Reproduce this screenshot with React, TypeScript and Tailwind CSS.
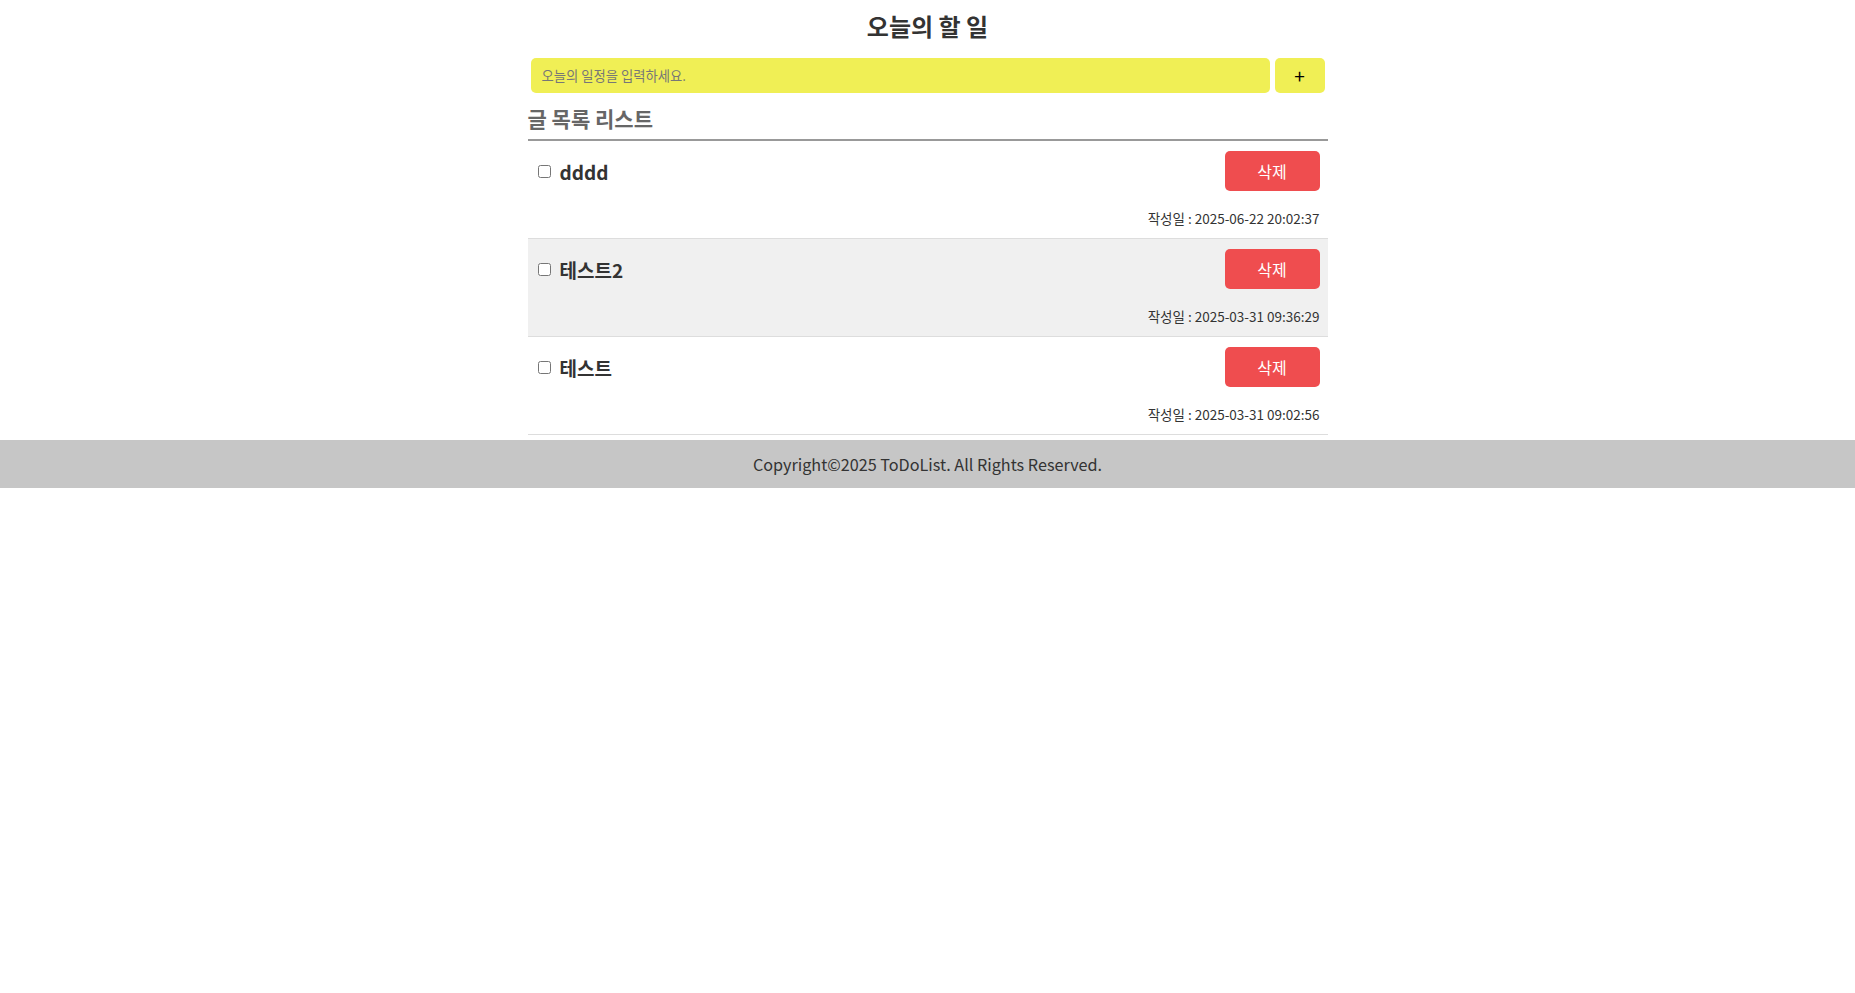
import React from "react";

const items = [
  { id: 1, title: "dddd", date: "2025-06-22 20:02:37" },
  { id: 2, title: "테스트2", date: "2025-03-31 09:36:29" },
  { id: 3, title: "테스트", date: "2025-03-31 09:02:56" },
];

export default function App() {
  return (
    <div
      className="min-h-screen bg-white text-[#333]"
      style={{ fontFamily: '"Noto Sans CJK KR", "Noto Sans", sans-serif' }}
    >
      <div className="mx-auto w-[800px]">
        <h1 className="pt-[8px] text-center text-[24px] font-bold leading-[36px] text-[#333]">
          오늘의 할 일
        </h1>
        <form
          className="mt-[14px] flex gap-[5px] px-[3px]"
          onSubmit={(e) => e.preventDefault()}
        >
          <input
            type="text"
            placeholder="오늘의 일정을 입력하세요."
            className="h-[35px] flex-1 rounded-[5px] bg-[#f0ef55] px-[11px] text-[13.33px] text-[#333] outline-none placeholder:text-[#777]"
          />
          <button
            type="submit"
            className="h-[35px] w-[50px] rounded-[5px] bg-[#f0ef55] text-[19px] leading-none text-black"
          >
            +
          </button>
        </form>
        <h2 className="mt-[5px] border-b-2 border-[#999] text-[21px] font-bold leading-[41px] text-[#666]">
          글 목록 리스트
        </h2>
        <ul>
          {items.map((item, i) => (
            <li
              key={item.id}
              className={
                "border-b border-[#ddd] py-[10px] pl-[10px] pr-[8px] " +
                (i === 1 ? "bg-[#f0f0f0]" : "bg-white")
              }
            >
              <div className="flex items-center justify-between">
                <label className="flex items-center gap-[9px]">
                  <input type="checkbox" className="m-0 h-[13px] w-[13px]" />
                  <span className="pt-[2px] text-[19px] font-bold leading-[28px] text-[#333]">
                    {item.title}
                  </span>
                </label>
                <button className="h-[40px] w-[95px] rounded-[5px] bg-[#ef4d4f] text-[16px] text-white">
                  삭제
                </button>
              </div>
              <div className="mt-[17px] text-right text-[13.5px] leading-[20px] text-[#333]">
                작성일 : {item.date}
              </div>
            </li>
          ))}
        </ul>
      </div>
      <footer className="mt-[5px] flex h-[48px] items-center justify-center bg-[#c6c6c6] text-[16.2px] text-[#333]">
        Copyright©2025 ToDoList. All Rights Reserved.
      </footer>
    </div>
  );
}
